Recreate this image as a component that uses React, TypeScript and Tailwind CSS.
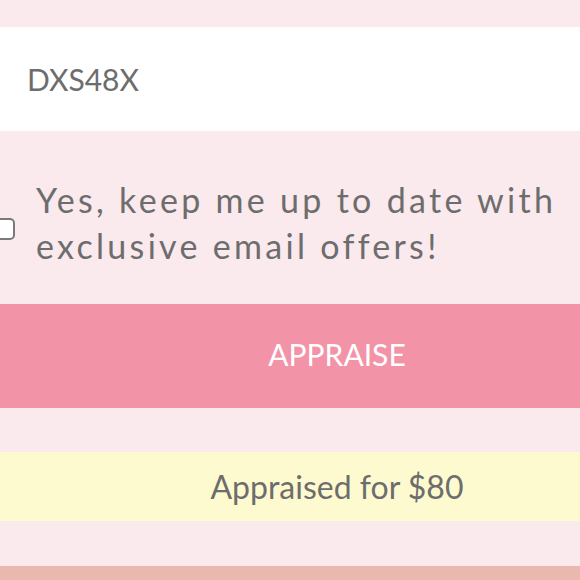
export default function App() {
  return (
    <div className="min-h-screen overflow-hidden bg-[#fae9ed] pt-[27px] font-['Lato','Liberation_Sans',sans-serif] text-[#6d6d6d]">
      {/* code input */}
      <div className="flex h-[104px] items-center bg-white pl-[27px] text-[30px]">
        DXS48X
      </div>

      {/* newsletter opt-in */}
      <label className="mt-[46px] flex items-center">
        <span className="-ml-[7px] mt-[12px] h-[22px] w-[22px] shrink-0 rounded-[5px] border-2 border-[#7a7a7a] bg-white" />
        <span className="ml-[21px] whitespace-nowrap text-[34px] leading-[46px] tracking-[3.3px]">
          Yes, keep me up to date with
          <br />
          exclusive email offers!
        </span>
      </label>

      <button className="mt-[35px] flex h-[104px] w-full items-center justify-center bg-[#f393a8] pb-[4px] pl-[94px] text-[30px] text-white">
        APPRAISE
      </button>

      <div className="mt-[44px] flex h-[69px] items-center justify-center bg-[#fefacf] pl-[94px] text-[32px]">
        Appraised for $80
      </div>

      <div className="mt-[45px] h-[40px] bg-[#e9b9b0]" />
    </div>
  );
}
